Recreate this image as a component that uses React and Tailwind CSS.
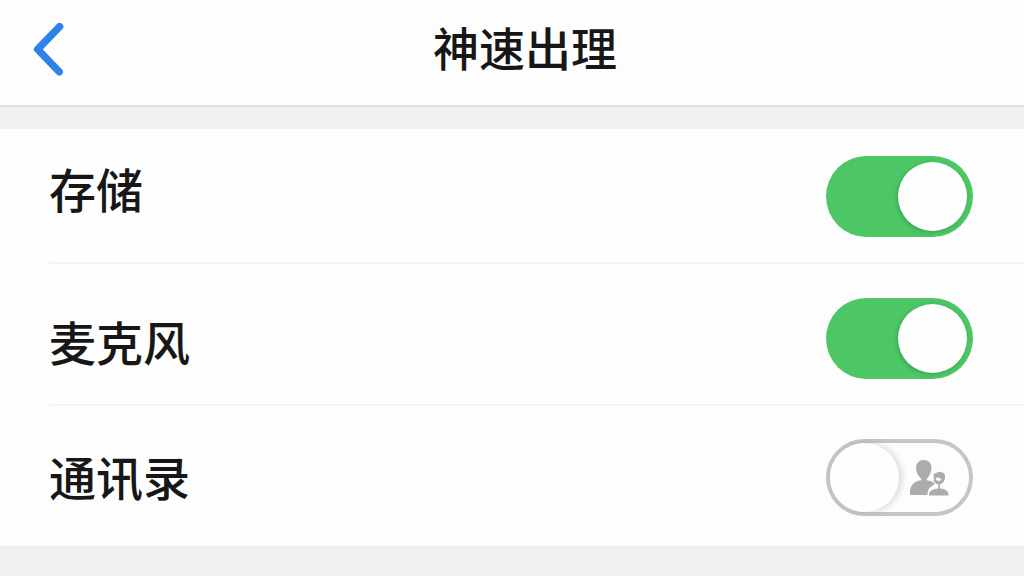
const labelFont = "font-['Noto_Sans_CJK_SC',sans-serif]";

function BackIcon() {
  return (
    <svg className="h-[60px] w-[40px]" viewBox="0 0 40 60" fill="none" aria-hidden="true">
      <path d="M30.6 7.7 8.600 30.300 30.200 52.800" stroke="#2f82ea" strokeWidth="7.400" strokeLinecap="round" strokeLinejoin="round" />
    </svg>
  );
}

function PeopleIcon() {
  return (
    <svg className="h-[36px] w-[40px]" viewBox="0 0 40 36" fill="#acacac" aria-hidden="true">
      <path d="M14.700 0C19.400 0 22.700 3.300 22.500 8c-.2 4.500-2.300 8.300-4.800 10.900v1.400c3.200.4 6.100 1.500 8 3.200-1.700 2.700-5.500 3.600-6.500 6.700l-.9 4.800H1V31C1.400 24.600 6 20.800 12.200 20.200v-1.400C9.600 16.300 7.100 12.500 7 8 6.900 3.300 10 0 14.700 0Z" />
      <path d="M20 35.500v-1.600c.5-3.200 4.400-5.100 9.300-5.500v-3.900H31v3.900c4.800.2 8.200 2.700 8.500 5.500v1.600Z" />
      <path fillRule="evenodd" d="M24.300 15.500c.7-2.200 2.300-3.100 4.200-3.100.8-.6 2-.8 3-.4 3.100.1 5 2.200 4.500 4.800.2 3.800-2.200 6.700-5 7.700h-2.200c-2.100-.7-3.900-2.200-4.400-4.400l1-.7-1.500-1.400 1.400-.8Zm2.400 2.500c.1 1.900 1.600 2.900 3 2.900 1.500 0 2.800-.9 3-2.300-1.500.2-2.700-.4-3.300-1.700-.7.700-1.700 1-2.700 1.100Z" />
    </svg>
  );
}

function Toggle({ on, children }) {
  if (on) {
    return (
      <button role="switch" aria-checked="true" className="flex h-[81px] w-[147px] shrink-0 items-center justify-end rounded-full bg-[#4dc766] pr-[6px]">
        <span className="h-[69px] w-[69px] rounded-full bg-[#fefefe] shadow-[-1px_1px_4px_rgba(0,70,20,0.3)]" />
      </button>
    );
  }
  return (
    <button role="switch" aria-checked="false" className="flex h-[77px] w-[147px] shrink-0 items-center rounded-full border-4 border-[#c6c6c6] bg-[#fdfdfd]">
      <span className="h-[69px] w-[69px] shrink-0 rounded-full bg-[#fefefe] shadow-[3px_0px_7px_rgba(0,0,0,0.14)]" />
      <span className="ml-[10px]">{children}</span>
    </button>
  );
}

export default function App() {
  return (
    <div className={`flex h-[576px] w-[1024px] flex-col overflow-hidden bg-[#f0f0f3] text-[#171717] ${labelFont}`}>
      <header className="flex h-[107px] shrink-0 items-start border-b-2 border-[#dedee1] bg-[#fdfdfd]">
        <button aria-label="返回" className="mt-[19px] ml-[29px] w-[40px]">
          <BackIcon />
        </button>
        <h1 className="mt-[12px] ml-[364px] text-[46px] leading-[68px] font-medium">神速出理</h1>
      </header>
      <main className="mt-[22px] bg-[#fdfdfd]">
        <section className="flex h-[133px] items-start justify-between pr-[51px] pl-[49px]">
          <span className="mt-[25px] text-[47px] leading-[68px] font-medium">存储</span>
          <div className="mt-[27px] flex"><Toggle on /></div>
        </section>
        <div className="ml-[49px] h-[2px] bg-[#f3f3f4]" />
        <section className="flex h-[140px] items-start justify-between pr-[51px] pl-[49px]">
          <span className="mt-[43px] text-[47px] leading-[68px] font-medium">麦克风</span>
          <div className="mt-[34px] flex"><Toggle on /></div>
        </section>
        <div className="ml-[49px] h-[2px] bg-[#f3f3f4]" />
        <section className="flex h-[140px] items-start justify-between pr-[51px] pl-[49px]">
          <span className="mt-[36px] text-[47px] leading-[68px] font-medium">通讯录</span>
          <div className="mt-[33px] flex"><Toggle><PeopleIcon /></Toggle></div>
        </section>
      </main>
    </div>
  );
}
